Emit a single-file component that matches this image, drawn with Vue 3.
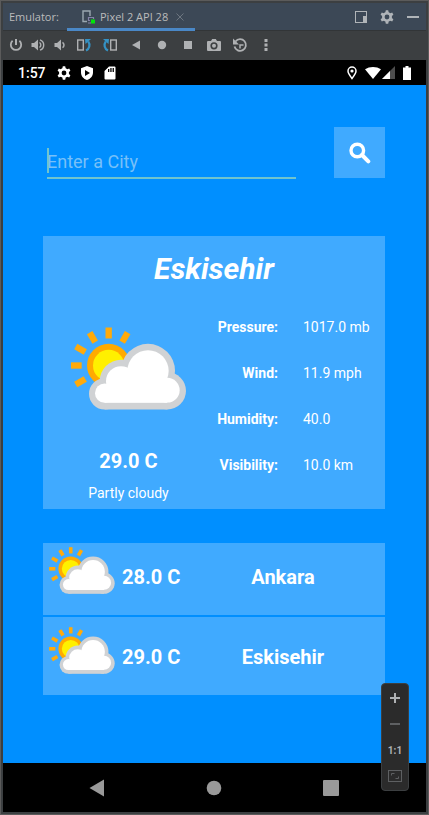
<script setup>
import { ref } from 'vue'

const city = ref('')

const rays = [30, 0, -30, -60, -90, -120]

const current = {
  city: 'Eskisehir',
  temp: '29.0 C',
  condition: 'Partly cloudy',
  details: [
    { label: 'Pressure:', value: '1017.0 mb' },
    { label: 'Wind:', value: '11.9 mph' },
    { label: 'Humidity:', value: '40.0' },
    { label: 'Visibility:', value: '10.0 km' },
  ],
}

const saved = [
  { city: 'Ankara', temp: '28.0 C' },
  { city: 'Eskisehir', temp: '29.0 C' },
]

const gearTeeth = [0, 60, 120, 180, 240, 300]
</script>

<template>
  <svg class="defs" aria-hidden="true">
    <symbol id="partly-cloudy" viewBox="0 0 345 248">
      <rect
        v-for="angle in rays"
        :key="angle"
        x="103.5"
        y="1"
        width="19"
        height="33"
        fill="#ffaa0a"
        :transform="`rotate(${angle} 113 115)`"
      />
      <circle cx="113" cy="115" r="65" fill="#ffaa00" />
      <circle cx="113" cy="115" r="47" fill="#fff000" />
      <g fill="#d0d2d4">
        <circle cx="101" cy="200" r="47" />
        <circle cx="150" cy="162" r="64" />
        <circle cx="231" cy="131" r="81" />
        <circle cx="289" cy="191" r="56" />
        <rect x="101" y="160" width="188" height="87" />
      </g>
      <g fill="#ffffff">
        <circle cx="101" cy="198" r="29" />
        <circle cx="150" cy="162" r="45" />
        <circle cx="231" cy="131" r="62" />
        <circle cx="289" cy="189" r="37" />
        <rect x="101" y="176" width="188" height="51" />
      </g>
    </symbol>
    <symbol id="gear" viewBox="0 0 14 14">
      <circle cx="7" cy="7" r="3.7" fill="none" stroke="currentColor" stroke-width="2.6" />
      <path
        v-for="angle in gearTeeth"
        :key="angle"
        d="M5.3 2.8 5.8.3h2.4l.5 2.5z"
        fill="currentColor"
        :transform="`rotate(${angle} 7 7)`"
      />
    </symbol>
  </svg>

  <div class="window">
    <header class="titlebar">
      <span class="title">Emulator:</span>
      <div class="tab">
        <svg width="13" height="14" viewBox="0 0 13 14">
          <path d="M5 11.5H1V1h7v5" fill="none" stroke="#9aa7b0" stroke-width="1.4" />
          <path d="M11.5 9V7.5h-5v3H8M6 13h3" fill="none" stroke="#8584a8" stroke-width="1.2" />
          <rect x="9" y="9.5" width="4" height="4" fill="#00e408" />
        </svg>
        <span>Pixel 2 API 28</span>
        <button class="plain close" aria-label="Close tab">
          <svg width="8" height="8" viewBox="0 0 8 8">
            <path d="M.5.5l7 7M7.5.5l-7 7" stroke="#6d7680" />
          </svg>
        </button>
      </div>
      <div class="window-actions">
        <button class="plain" aria-label="Dock window">
          <svg width="12" height="12" viewBox="0 0 12 12">
            <rect x=".5" y=".5" width="11" height="11" fill="none" stroke="#b0b4b8" />
            <path d="M8 5h4v7H8z" fill="#b0b4b8" />
          </svg>
        </button>
        <button class="plain" aria-label="Settings">
          <svg width="14" height="14"><use href="#gear" /></svg>
        </button>
        <button class="plain" aria-label="Minimize">
          <svg width="12" height="12" viewBox="0 0 12 12"><path d="M0 5h12v2H0z" fill="#b0b4b8" /></svg>
        </button>
      </div>
    </header>

    <nav class="toolbar" aria-label="Emulator controls">
      <button class="plain tool small" aria-label="Power">
        <svg viewBox="0 0 16 16">
          <path d="M4.6 3.8a5.2 5.2 0 1 0 6.8 0" fill="none" stroke="currentColor" stroke-width="1.8" />
          <path d="M8 2v6" stroke="currentColor" stroke-width="2" />
        </svg>
      </button>
      <button class="plain tool small" aria-label="Volume up">
        <svg viewBox="0 0 16 16">
          <path d="M1.5 6H4l4-3.6v11.2L4 10H1.5z" fill="currentColor" />
          <path d="M9.5 5.5a3 3 0 0 1 0 5M10 2.8a5.5 5.5 0 0 1 0 10.4" fill="none" stroke="currentColor" stroke-width="1.4" />
        </svg>
      </button>
      <button class="plain tool small" aria-label="Volume down">
        <svg viewBox="0 0 16 16">
          <path d="M2.5 6H5l4-3.6v11.2L5 10H2.5z" fill="currentColor" />
          <path d="M10.5 5.3a3.2 3.2 0 0 1 0 5.4" fill="none" stroke="currentColor" stroke-width="1.5" />
        </svg>
      </button>
      <button class="plain tool" aria-label="Rotate left">
        <svg viewBox="0 0 16 16">
          <rect x="1.7" y="3" width="5.6" height="10" fill="none" stroke="currentColor" stroke-width="1.4" />
          <path d="M10 13.6c3.6-1.8 4.5-6 2.2-9.2" fill="none" stroke="#3592c4" stroke-width="2.2" />
          <path d="M9 2h6l-5.5 5z" fill="#3592c4" />
        </svg>
      </button>
      <button class="plain tool" aria-label="Rotate right">
        <svg viewBox="0 0 16 16">
          <rect x="8.7" y="3" width="5.6" height="10" fill="none" stroke="currentColor" stroke-width="1.4" />
          <path d="M6 13.6C2.4 11.8 1.5 7.6 3.8 4.4" fill="none" stroke="#3592c4" stroke-width="2.2" />
          <path d="M7 2H1l5.500 5z" fill="#3592c4" />
        </svg>
      </button>
      <button class="plain tool" aria-label="Back">
        <svg viewBox="0 0 16 16"><path d="M12 3.500v9L4 8z" fill="currentColor" /></svg>
      </button>
      <button class="plain tool" aria-label="Home">
        <svg viewBox="0 0 16 16"><circle cx="8" cy="8" r="4.200" fill="currentColor" /></svg>
      </button>
      <button class="plain tool" aria-label="Overview">
        <svg viewBox="0 0 16 16"><path d="M4 4h8v8H4z" fill="currentColor" /></svg>
      </button>
      <button class="plain tool" aria-label="Take screenshot">
        <svg viewBox="0 0 16 16">
          <path
            d="M2 4h3l1.200-2h3.600L11 4h3q1 0 1 1v8q0 1-1 1H2q-1 0-1-1V5q0-1 1-1zM8 5.200a3.600 3.600 0 1 0 0 7.200 3.600 3.600 0 0 0 0-7.200zM8 6.800a2 2 0 1 1 0 4 2 2 0 0 1 0-4z"
            fill="currentColor"
            fill-rule="evenodd"
          />
        </svg>
      </button>
      <button class="plain tool" aria-label="Snapshots">
        <svg viewBox="0 0 16 16">
          <path d="M3.500 4.500a5.800 5.800 0 1 1-1 5" fill="none" stroke="currentColor" stroke-width="1.800" />
          <path d="M1 1.500v6h6z" fill="currentColor" />
          <path d="M11.500 8H8v3.500" fill="none" stroke="currentColor" stroke-width="1.500" />
        </svg>
      </button>
      <button class="plain tool" aria-label="More">
        <svg viewBox="0 0 16 16">
          <path d="M6.500 2h3v3h-3zM6.500 6.500h3v3h-3zM6.500 11h3v3h-3z" fill="currentColor" />
        </svg>
      </button>
    </nav>

    <div class="status">
      <time>1:57</time>
      <div class="status-left">
        <svg width="14" height="14"><use href="#gear" /></svg>
        <svg width="14" height="14" viewBox="0 0 14 14">
          <path d="M7 0l6 2.300v4.200C13 10 10.500 13 7 14 3.500 13 1 10 1 6.500V2.300zM5 4v6l5-3z" fill="#fff" fill-rule="evenodd" />
        </svg>
        <svg width="14" height="14" viewBox="0 0 14 14">
          <path
            d="M6 .5h5.500q1 0 1 1v11q0 1-1 1h-9q-1 0-1-1V5zM5 3v3h1.300V3zM7.300 2v4h1.300V2zM9.600 2v4h1.300V2z"
            fill="#fff"
            fill-rule="evenodd"
          />
        </svg>
      </div>
      <div class="status-right">
        <svg width="10" height="14" viewBox="0 0 10 14">
          <path d="M5 1a4 4 0 0 1 4 4c0 2.500-2.500 5.500-4 7.500C3.500 10.500 1 7.500 1 5a4 4 0 0 1 4-4z" fill="none" stroke="#fff" stroke-width="1.500" />
          <circle cx="5" cy="5" r="1.600" fill="#fff" />
        </svg>
        <svg class="wifi" width="16" height="14" viewBox="0 0 16 14">
          <path d="M8 13L0 3.200Q3.500 1 8 1t8 2.200z" fill="#fff" />
        </svg>
        <svg width="14" height="14" viewBox="0 0 14 14">
          <path d="M13 0v13H0z" fill="#4d4d4d" />
          <path d="M8 5v8H0z" fill="#fff" />
        </svg>
        <svg class="battery" width="8" height="14" viewBox="0 0 8 14">
          <path d="M2.500 0h3v1.500H8V14H0V1.500h2.500z" fill="#fff" />
        </svg>
      </div>
    </div>

    <main class="app">
      <form class="search" @submit.prevent>
        <div class="field">
          <input v-model="city" type="text" placeholder="Enter a City" aria-label="Enter a City" />
          <span class="caret"></span>
        </div>
        <button class="plain search-button" aria-label="Search">
          <svg width="22" height="22" viewBox="0 0 22 22">
            <circle cx="8.300" cy="8.500" r="6.300" fill="none" stroke="#fff" stroke-width="3.400" />
            <path d="M13 13l6.300 6.300" stroke="#fff" stroke-width="4" stroke-linecap="round" />
          </svg>
        </button>
      </form>

      <section class="card">
        <h1>{{ current.city }}</h1>
        <div class="card-body">
          <div class="summary">
            <svg class="weather-large" aria-hidden="true"><use href="#partly-cloudy" /></svg>
            <strong class="temp">{{ current.temp }}</strong>
            <span class="condition">{{ current.condition }}</span>
          </div>
          <dl class="details">
            <template v-for="item in current.details" :key="item.label">
              <dt>{{ item.label }}</dt>
              <dd>{{ item.value }}</dd>
            </template>
          </dl>
        </div>
      </section>

      <ul class="cities">
        <li v-for="item in saved" :key="item.city">
          <svg class="weather-small" aria-hidden="true"><use href="#partly-cloudy" /></svg>
          <strong class="temp">{{ item.temp }}</strong>
          <strong class="name">{{ item.city }}</strong>
        </li>
      </ul>
    </main>

    <nav class="system-nav" aria-label="System navigation">
      <button class="plain" aria-label="Back">
        <svg width="18" height="18" viewBox="0 0 18 18"><path d="M16 .5v17L1.500 9z" fill="#999" /></svg>
      </button>
      <button class="plain" aria-label="Home">
        <svg width="18" height="18" viewBox="0 0 18 18"><circle cx="9" cy="9" r="7.300" fill="#999" /></svg>
      </button>
      <button class="plain" aria-label="Recent apps">
        <svg width="18" height="18" viewBox="0 0 18 18"><rect x="1" y="1" width="16" height="16" rx="1" fill="#999" /></svg>
      </button>
    </nav>

    <div class="zoom">
      <button class="plain" aria-label="Zoom in">
        <svg width="10" height="10" viewBox="0 0 10 10"><path d="M4 0h2v4h4v2H6v4H4V6H0V4h4z" fill="#afb1b3" /></svg>
      </button>
      <button class="plain" aria-label="Zoom out">
        <svg width="10" height="10" viewBox="0 0 10 10"><path d="M0 4h10v2H0z" fill="#5e6062" /></svg>
      </button>
      <button class="plain ratio">1:1</button>
      <button class="plain" aria-label="Zoom to fit">
        <svg width="14" height="12" viewBox="0 0 14 12" fill="none" stroke="#5e6062">
          <rect x=".5" y=".5" width="13" height="11" />
          <path d="M3.500 5.500v-2h3M10.500 6.500v2h-3" />
        </svg>
      </button>
    </div>
  </div>
</template>

<style>
body {
  margin: 0;
  background: #3c3f41;
}
</style>

<style scoped>
* {
  box-sizing: border-box;
}

svg {
  display: block;
  flex: none;
}

.defs {
  position: absolute;
  width: 0;
  height: 0;
}

.plain {
  display: flex;
  align-items: center;
  justify-content: center;
  padding: 0;
  border: 0;
  background: none;
  color: inherit;
  font: inherit;
}

.window {
  position: relative;
  display: flex;
  flex-direction: column;
  min-height: 100vh;
  padding: 2px;
  border: 1px solid #5b5b5b;
  background: #3c3f41;
  font-family: Roboto, "Liberation Sans", sans-serif;
  color: #fff;
}

.titlebar {
  display: flex;
  height: 28px;
  padding: 0 7px 0 6px;
  box-shadow: inset 0 -1px #323537;
  background: #3c4856;
  color: #bbbbbb;
  font: 11px/28px "Open Sans", "Noto Sans", sans-serif;
}

.title {
  width: 58px;
}

.tab {
  display: flex;
  align-items: center;
  gap: 5px;
  width: 128px;
  padding: 3px 0 0 15px;
  border-bottom: 3px solid #4a88c7;
  line-height: 22px;
  white-space: nowrap;
}

.close {
  margin-left: 3px;
}

.window-actions {
  display: flex;
  gap: 13px;
  margin-left: auto;
  color: #b0b4b8;
}

.toolbar {
  display: flex;
  align-items: flex-start;
  height: 29px;
  padding-left: 2px;
  color: #afb1b3;
}

.tool {
  width: 26px;
  height: 28px;
}

.tool.small {
  width: 22px;
}

.tool svg {
  width: 16px;
  height: 16px;
}

.status {
  display: flex;
  align-items: center;
  height: 25px;
  padding: 0 15px;
  background: #000;
  font-size: 14px;
  font-weight: 500;
}

.status-left {
  display: flex;
  gap: 9px;
  margin-left: 11px;
}

.status-right {
  display: flex;
  margin-left: auto;
}

.wifi {
  margin: 0 1px 0 8px;
}

.battery {
  margin-left: 7px;
}

.app {
  flex: 1;
  padding: 42px 41px 67px 40px;
  background: #008fff;
}

.search {
  display: flex;
  gap: 38px;
  padding-left: 4px;
}

.field {
  position: relative;
  flex: 1;
}

.field input {
  width: 100%;
  height: 52px;
  padding: 18px 0 0;
  border: 0;
  border-bottom: 2px solid #70c4cd;
  outline: 0;
  background: none;
  color: #fff;
  font: 18px/24px Roboto, "Liberation Sans", sans-serif;
}

.field input::placeholder {
  color: #78c0f8;
  opacity: 1;
}

.caret {
  position: absolute;
  top: 21px;
  left: 0;
  width: 2px;
  height: 25px;
  background: #70c4cd;
}

.search-button {
  width: 51px;
  height: 51px;
  background: #40aaff;
}

.card {
  margin-top: 57px;
  padding-top: 13px;
  background: #40aaff;
}

h1 {
  margin: 0;
  font-size: 30px;
  font-style: italic;
  font-weight: 700;
  line-height: 40px;
  text-align: center;
}

.card-body {
  display: grid;
  grid-template-columns: 1fr 1fr;
  margin-top: 15px;
}

.summary {
  display: flex;
  flex-direction: column;
  align-items: center;
  padding-top: 23px;
}

.weather-large {
  width: 115px;
  height: 83px;
}

.temp,
.name {
  font-size: 20px;
  font-weight: 700;
  line-height: 32px;
}

.summary .temp {
  margin-top: 35px;
}

.condition {
  font-size: 14px;
  line-height: 32px;
}

.details {
  display: grid;
  grid-template-columns: 64px 1fr;
  grid-auto-rows: 46px;
  align-items: center;
  column-gap: 25px;
  margin: 0;
  font-size: 14px;
  white-space: nowrap;
}

.details dt {
  justify-self: end;
  font-weight: 700;
}

.details dd {
  margin: 0;
}

.cities {
  margin: 34px 0 0;
  padding: 0;
  list-style: none;
}

.cities li {
  display: grid;
  grid-template-columns: 66px 60px 1fr;
  column-gap: 7px;
  align-items: start;
  padding: 10px 8px 21px 6px;
  background: #40aaff;
}

.cities li:first-child {
  margin-bottom: 2px;
  padding-top: 4px;
}

.weather-small {
  width: 66px;
  height: 47px;
}

.cities .temp,
.cities .name {
  margin-top: 14px;
}

.cities .name {
  text-align: center;
}

.system-nav {
  display: grid;
  grid-template-columns: repeat(3, 117px);
  justify-content: center;
  height: 49px;
  padding-right: 2px;
  background: #000;
}

.zoom {
  position: absolute;
  right: 19px;
  bottom: 23px;
  display: grid;
  grid-auto-rows: 26px;
  width: 28px;
  padding: 1px 0;
  border: 1px solid #3c3f41;
  border-radius: 4px;
  background: #2b2b2b;
}

.ratio {
  color: #afb1b3;
  font-size: 10px;
  font-weight: 700;
}
</style>
